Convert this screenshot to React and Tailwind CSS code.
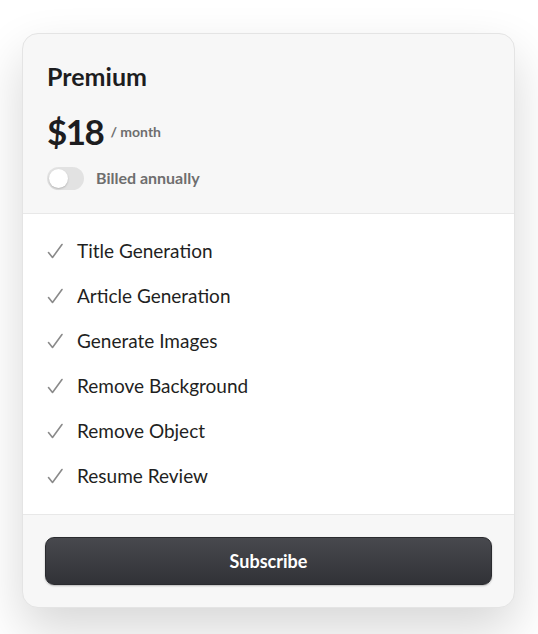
import React from "react";

const features = [
  "Title Generation",
  "Article Generation",
  "Generate Images",
  "Remove Background",
  "Remove Object",
  "Resume Review",
];

function Check() {
  return (
    <svg width="17" height="17" viewBox="0 0 17 17" fill="none" className="shrink-0">
      <path d="M1.5 9.5 L5.5 14.5 L15 1.5" stroke="#8a8a8a" strokeWidth="1.6" strokeLinecap="round" strokeLinejoin="round" />
    </svg>
  );
}

export default function App() {
  return (
    <div className="min-h-[634px] w-[538px] bg-white pt-[33px] pl-[22px]" style={{ fontFamily: "Lato, 'Noto Sans', sans-serif" }}>
      <div className="w-[493px] overflow-hidden rounded-[16px] border border-[#e4e4e4] bg-[#f7f7f7] shadow-[0_22px_50px_rgba(0,0,0,0.16)]">
        <div className="px-6 pt-[26px] pb-[23px]">
          <div className="text-[25px] font-bold leading-[32px] text-[#1d1d1f]">Premium</div>
          <div className="mt-[17px] flex items-center gap-[7px]">
            <span className="text-[35px] font-bold leading-[44px] tracking-[-1.5px] text-[#1d1d1f]">$18</span>
            <span className="text-[14px] font-bold text-[#6e6e6e]">/ month</span>
          </div>
          <div className="mt-[13px] flex items-center gap-3">
            <div className="flex h-[23px] w-[37px] items-center rounded-full bg-[#e2e2e2] px-[2px]">
              <div className="h-[19px] w-[19px] rounded-full bg-white shadow-[0_1px_2px_rgba(0,0,0,0.2)]" />
            </div>
            <span className="text-[16px] font-bold text-[#6e6e6e]">Billed annually</span>
          </div>
        </div>
        <div className="border-y border-[#e8e8e8] bg-white px-6 py-[15px]">
          {features.map((f) => (
            <div key={f} className="flex h-[45px] items-center gap-[13px]">
              <Check />
              <span className="text-[19px] text-[#1f1f22]">{f}</span>
            </div>
          ))}
        </div>
        <div className="px-[22px] pt-[22px] pb-[22px]">
          <button className="flex h-[48px] w-full items-center justify-center rounded-[9px] border border-[#2a2b2f] bg-gradient-to-b from-[#48494e] to-[#313237] text-[18px] font-bold text-white shadow-[0_1px_2px_rgba(0,0,0,0.25)]">
            Subscribe
          </button>
        </div>
      </div>
    </div>
  );
}
